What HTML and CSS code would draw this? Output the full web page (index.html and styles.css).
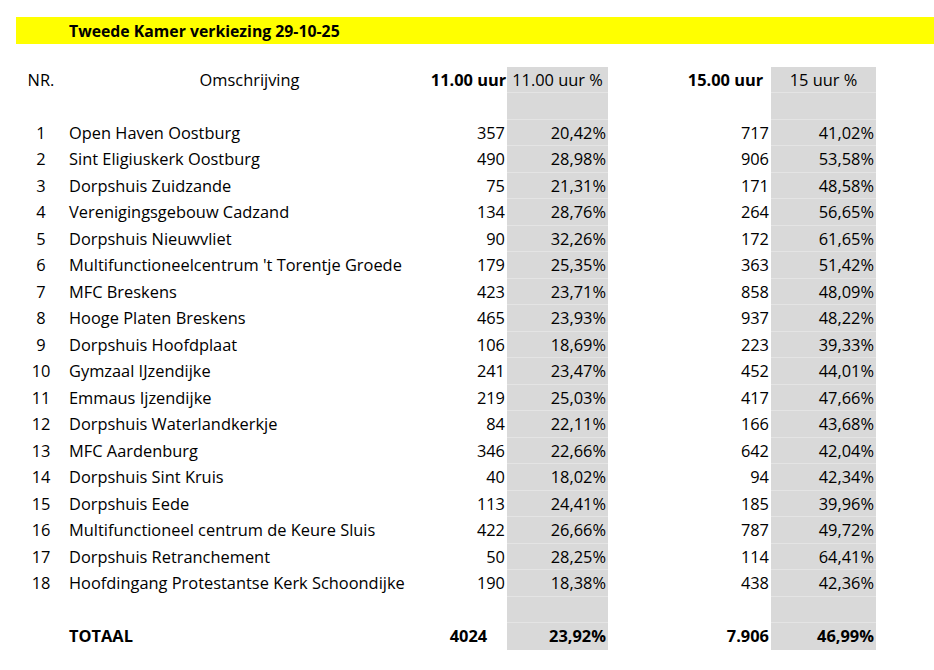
FILE: index.html
```html
<!DOCTYPE html>
<html lang="nl">
<head>
<meta charset="utf-8">
<title>Tweede Kamer verkiezing 29-10-25</title>
<link rel="stylesheet" href="styles.css">
</head>
<body>
<div class="page">
  <div class="title-bar"><span class="title">Tweede Kamer verkiezing 29-10-25</span></div>
  <div class="sheet">
    <div class="c ca">NR.</div><div class="c cb hdr-desc">Omschrijving</div><div class="c cc b ctr">11.00 uur</div><div class="c g ctr">11.00 uur %</div><div class="c"></div><div class="c b ctr">15.00 uur</div><div class="c g ctr">15 uur %</div>

    <div class="c"></div><div class="c"></div><div class="c"></div><div class="c g"></div><div class="c"></div><div class="c"></div><div class="c g"></div>

    <div class="c ca">1</div><div class="c cb">Open Haven Oostburg</div><div class="c r">357</div><div class="c g r">20,42%</div><div class="c"></div><div class="c r">717</div><div class="c g r">41,02%</div>
    <div class="c ca">2</div><div class="c cb">Sint Eligiuskerk Oostburg</div><div class="c r">490</div><div class="c g r">28,98%</div><div class="c"></div><div class="c r">906</div><div class="c g r">53,58%</div>
    <div class="c ca">3</div><div class="c cb">Dorpshuis Zuidzande</div><div class="c r">75</div><div class="c g r">21,31%</div><div class="c"></div><div class="c r">171</div><div class="c g r">48,58%</div>
    <div class="c ca">4</div><div class="c cb">Verenigingsgebouw Cadzand</div><div class="c r">134</div><div class="c g r">28,76%</div><div class="c"></div><div class="c r">264</div><div class="c g r">56,65%</div>
    <div class="c ca">5</div><div class="c cb">Dorpshuis Nieuwvliet</div><div class="c r">90</div><div class="c g r">32,26%</div><div class="c"></div><div class="c r">172</div><div class="c g r">61,65%</div>
    <div class="c ca">6</div><div class="c cb">Multifunctioneelcentrum 't Torentje Groede</div><div class="c r">179</div><div class="c g r">25,35%</div><div class="c"></div><div class="c r">363</div><div class="c g r">51,42%</div>
    <div class="c ca">7</div><div class="c cb">MFC Breskens</div><div class="c r">423</div><div class="c g r">23,71%</div><div class="c"></div><div class="c r">858</div><div class="c g r">48,09%</div>
    <div class="c ca">8</div><div class="c cb">Hooge Platen Breskens</div><div class="c r">465</div><div class="c g r">23,93%</div><div class="c"></div><div class="c r">937</div><div class="c g r">48,22%</div>
    <div class="c ca">9</div><div class="c cb">Dorpshuis Hoofdplaat</div><div class="c r">106</div><div class="c g r">18,69%</div><div class="c"></div><div class="c r">223</div><div class="c g r">39,33%</div>
    <div class="c ca">10</div><div class="c cb">Gymzaal IJzendijke</div><div class="c r">241</div><div class="c g r">23,47%</div><div class="c"></div><div class="c r">452</div><div class="c g r">44,01%</div>
    <div class="c ca">11</div><div class="c cb">Emmaus Ijzendijke</div><div class="c r">219</div><div class="c g r">25,03%</div><div class="c"></div><div class="c r">417</div><div class="c g r">47,66%</div>
    <div class="c ca">12</div><div class="c cb">Dorpshuis Waterlandkerkje</div><div class="c r">84</div><div class="c g r">22,11%</div><div class="c"></div><div class="c r">166</div><div class="c g r">43,68%</div>
    <div class="c ca">13</div><div class="c cb">MFC Aardenburg</div><div class="c r">346</div><div class="c g r">22,66%</div><div class="c"></div><div class="c r">642</div><div class="c g r">42,04%</div>
    <div class="c ca">14</div><div class="c cb">Dorpshuis Sint Kruis</div><div class="c r">40</div><div class="c g r">18,02%</div><div class="c"></div><div class="c r">94</div><div class="c g r">42,34%</div>
    <div class="c ca">15</div><div class="c cb">Dorpshuis Eede</div><div class="c r">113</div><div class="c g r">24,41%</div><div class="c"></div><div class="c r">185</div><div class="c g r">39,96%</div>
    <div class="c ca">16</div><div class="c cb">Multifunctioneel centrum de Keure Sluis</div><div class="c r">422</div><div class="c g r">26,66%</div><div class="c"></div><div class="c r">787</div><div class="c g r">49,72%</div>
    <div class="c ca">17</div><div class="c cb">Dorpshuis Retranchement</div><div class="c r">50</div><div class="c g r">28,25%</div><div class="c"></div><div class="c r">114</div><div class="c g r">64,41%</div>
    <div class="c ca">18</div><div class="c cb">Hoofdingang Protestantse Kerk Schoondijke</div><div class="c r">190</div><div class="c g r">18,38%</div><div class="c"></div><div class="c r">438</div><div class="c g r">42,36%</div>

    <div class="c"></div><div class="c"></div><div class="c"></div><div class="c g"></div><div class="c"></div><div class="c"></div><div class="c g"></div>

    <div class="c"></div><div class="c cb b">TOTAAL</div><div class="c b ctr">4024</div><div class="c g r b last">23,92%</div><div class="c"></div><div class="c r b">7.906</div><div class="c g r b last">46,99%</div>
  </div>
</div>
</body>
</html>
```
FILE: styles.css
```css
html, body {
  margin: 0;
  padding: 0;
  background: #ffffff;
}

body {
  font-family: "Open Sans", Lato, "Liberation Sans", sans-serif;
  font-size: 16.4px;
  color: #000000;
}

.page {
  padding-top: 17px;
}

.title-bar {
  margin-left: 16px;
  height: 27px;
  background: #ffff00;
  display: flex;
  align-items: center;
  padding-left: 53px;
}

.title {
  font-weight: 700;
  font-size: 15.8px;
}

.sheet {
  margin-top: 22.75px;
  margin-left: 16px;
  display: grid;
  grid-template-columns: 50px 364px 77px 101px 72px 91px 105px;
  grid-auto-rows: 26.5px;
}

.c {
  box-sizing: border-box;
  line-height: 26px;
  white-space: nowrap;
  overflow: visible;
}

.ca {
  text-align: center;
}

.cb {
  padding-left: 3px;
}

.hdr-desc {
  text-align: center;
}

.b {
  font-weight: 700;
}

.ctr {
  text-align: center;
}

.r {
  text-align: right;
  padding-right: 2px;
}

.g {
  background: #d9d9d9;
  border-bottom: 1px solid #e4e4e4;
}

.g.last {
  border-bottom: none;
}
```
